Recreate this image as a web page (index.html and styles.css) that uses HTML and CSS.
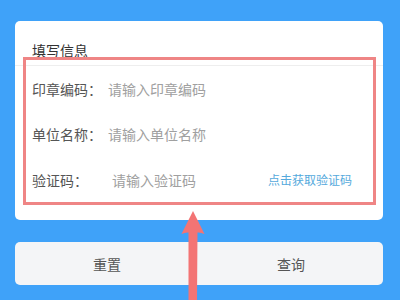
FILE: index.html
```html
<!DOCTYPE html>
<html lang="zh">

<head>
    <meta charset="UTF-8">
    <title>填写信息</title>
    <link rel="stylesheet" href="styles.css">
</head>

<body>
    <div class="page">
        <div class="card">
            <div class="card-title">填写信息</div>
            <div class="field">
                <span class="label">印章编码：</span>
                <span class="hint">请输入印章编码</span>
            </div>
            <div class="field">
                <span class="label">单位名称：</span>
                <span class="hint">请输入单位名称</span>
            </div>
            <div class="field field-code">
                <span class="label label-code">验证码：</span>
                <span class="hint">请输入验证码</span>
                <span class="get-code">点击获取验证码</span>
            </div>
            <div class="mark"></div>
        </div>
        <div class="actions">
            <div class="btn">重置</div>
            <div class="btn">查询</div>
        </div>
        <svg class="arrow" width="26" height="92" viewBox="0 0 26 92">
            <path d="M13 1 L24.5 24 Q20 22 17.5 22.5 L17 92 L8.5 92 L8.5 22.5 Q6 22 1.5 24 Z" fill="#f37474"/>
        </svg>
    </div>
</body>

</html>
```
FILE: styles.css
```css
* {
    margin: 0;
    padding: 0;
    box-sizing: border-box;
}

html,
body {
    width: 400px;
    height: 300px;
    overflow: hidden;
    background: #3fa2f9;
    font-family: "Noto Sans CJK SC", "Noto Sans", sans-serif;
}

.page {
    position: relative;
    padding: 21px 17px 0 15px;
}

.card {
    position: relative;
    background: #fff;
    border-radius: 5px;
    padding: 0 0 19px 0;
}

.card-title {
    padding: 19px 0 5px 17px;
    font-size: 14px;
    line-height: 20px;
    color: #333;
    border-bottom: 1px solid #eee;
}

.field {
    display: flex;
    align-items: center;
    height: 45px;
    padding: 0 31px 0 17px;
    font-size: 14px;
}

.field-code {
    padding-top: 2px;
}

.label {
    width: 76px;
    color: #555;
}

.label-code {
    width: 80px;
}

.hint {
    flex: 1;
    color: #a0a0a0;
}

.get-code {
    font-size: 12px;
    color: #55a9dc;
}

/* 标注框 */
.mark {
    position: absolute;
    left: 8px;
    top: 36px;
    width: 353px;
    height: 148px;
    border: 3px solid #ef8585;
}

.actions {
    display: flex;
    margin-top: 22px;
    height: 43px;
    background: #f4f5f7;
    border-radius: 5px;
}

.btn {
    flex: 1;
    display: flex;
    align-items: center;
    justify-content: center;
    font-size: 14px;
    color: #555;
}

.arrow {
    position: absolute;
    left: 180px;
    top: 210px;
}
```
